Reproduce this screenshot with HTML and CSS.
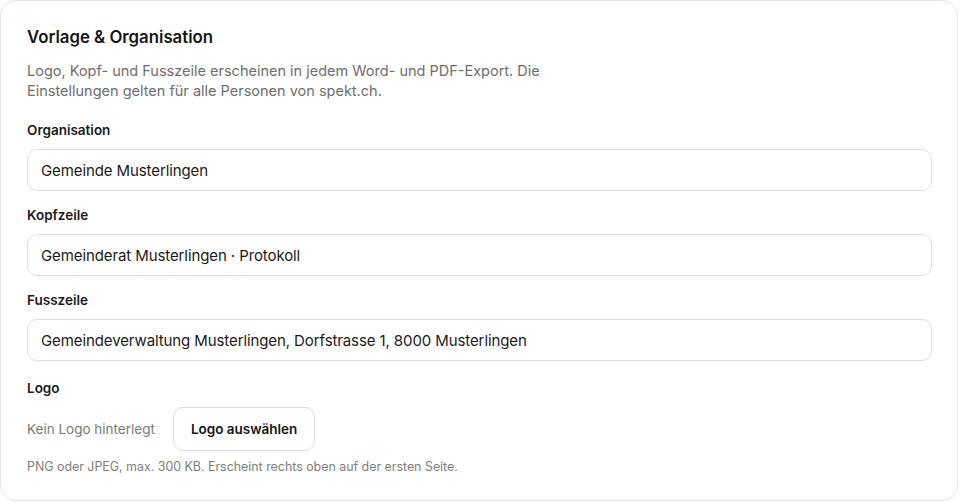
FILE: index.html
```html
<!DOCTYPE html>
<html lang="de">
<head>
    <meta charset="UTF-8">
    <meta name="viewport" content="width=device-width, initial-scale=1.0">
    <title>Vorlage & Organisation</title>
    <link rel="stylesheet" href="styles.css">
</head>
<body>
    <div class="card">
        <h2>Vorlage &amp; Organisation</h2>
        <p class="intro">Logo, Kopf- und Fusszeile erscheinen in jedem Word- und PDF-Export. Die<br>Einstellungen gelten für alle Personen von spekt.ch.</p>

        <div class="field">
            <label for="org">Organisation</label>
            <input type="text" id="org" value="Gemeinde Musterlingen">
        </div>
        <div class="field">
            <label for="header">Kopfzeile</label>
            <input type="text" id="header" value="Gemeinderat Musterlingen · Protokoll">
        </div>
        <div class="field">
            <label for="footer">Fusszeile</label>
            <input type="text" id="footer" value="Gemeindeverwaltung Musterlingen, Dorfstrasse 1, 8000 Musterlingen">
        </div>

        <div class="field logo-field">
            <label>Logo</label>
            <div class="logo-row">
                <span class="muted">Kein Logo hinterlegt</span>
                <button type="button">Logo auswählen</button>
            </div>
            <p class="hint">PNG oder JPEG, max. 300 KB. Erscheint rechts oben auf der ersten Seite.</p>
        </div>
    </div>
</body>
</html>
```

FILE: styles.css
```css
body {
    font-family: Inter, "Noto Sans", sans-serif;
    background: #fff;
    margin: 0;
    color: #1a1a1a;
}
.card {
    width: 958px;
    height: 501px;
    box-sizing: border-box;
    background: #fff;
    border: 1px solid #e6e6e6;
    border-radius: 16px;
    padding: 25px 25px 0 26px;
}
h2 {
    font-size: 16.8px;
    font-weight: 600;
    line-height: 22px;
    margin: 0 0 13px;
    color: #151515;
}
.intro {
    font-size: 14.5px;
    line-height: 20px;
    color: #6e6e6e;
    margin: 0 0 20px;
}
.field {
    display: flex;
    flex-direction: column;
    gap: 10px;
    margin-bottom: 15px;
}
label {
    font-size: 13.5px;
    font-weight: 600;
    line-height: 18px;
    color: #1a1a1a;
}
input {
    height: 42px;
    box-sizing: border-box;
    border: 1px solid #dedede;
    border-radius: 10px;
    padding: 0 13px;
    font-family: inherit;
    font-size: 15px;
    letter-spacing: -0.1px;
    color: #1a1a1a;
    background: #fff;
}
.logo-field {
    gap: 10px;
    margin-top: 18px;
    margin-bottom: 0;
}
.logo-row {
    display: flex;
    align-items: center;
    gap: 18px;
}
.muted {
    font-size: 13.5px;
    color: #7a7a7a;
}
button {
    height: 44px;
    padding: 0 17px;
    background: #fff;
    border: 1px solid #dedede;
    border-radius: 10px;
    font-family: inherit;
    font-size: 13.5px;
    font-weight: 600;
    color: #151515;
}
.hint {
    font-size: 12.4px;
    color: #7e7e7e;
    margin: -2px 0 0;
}
```
